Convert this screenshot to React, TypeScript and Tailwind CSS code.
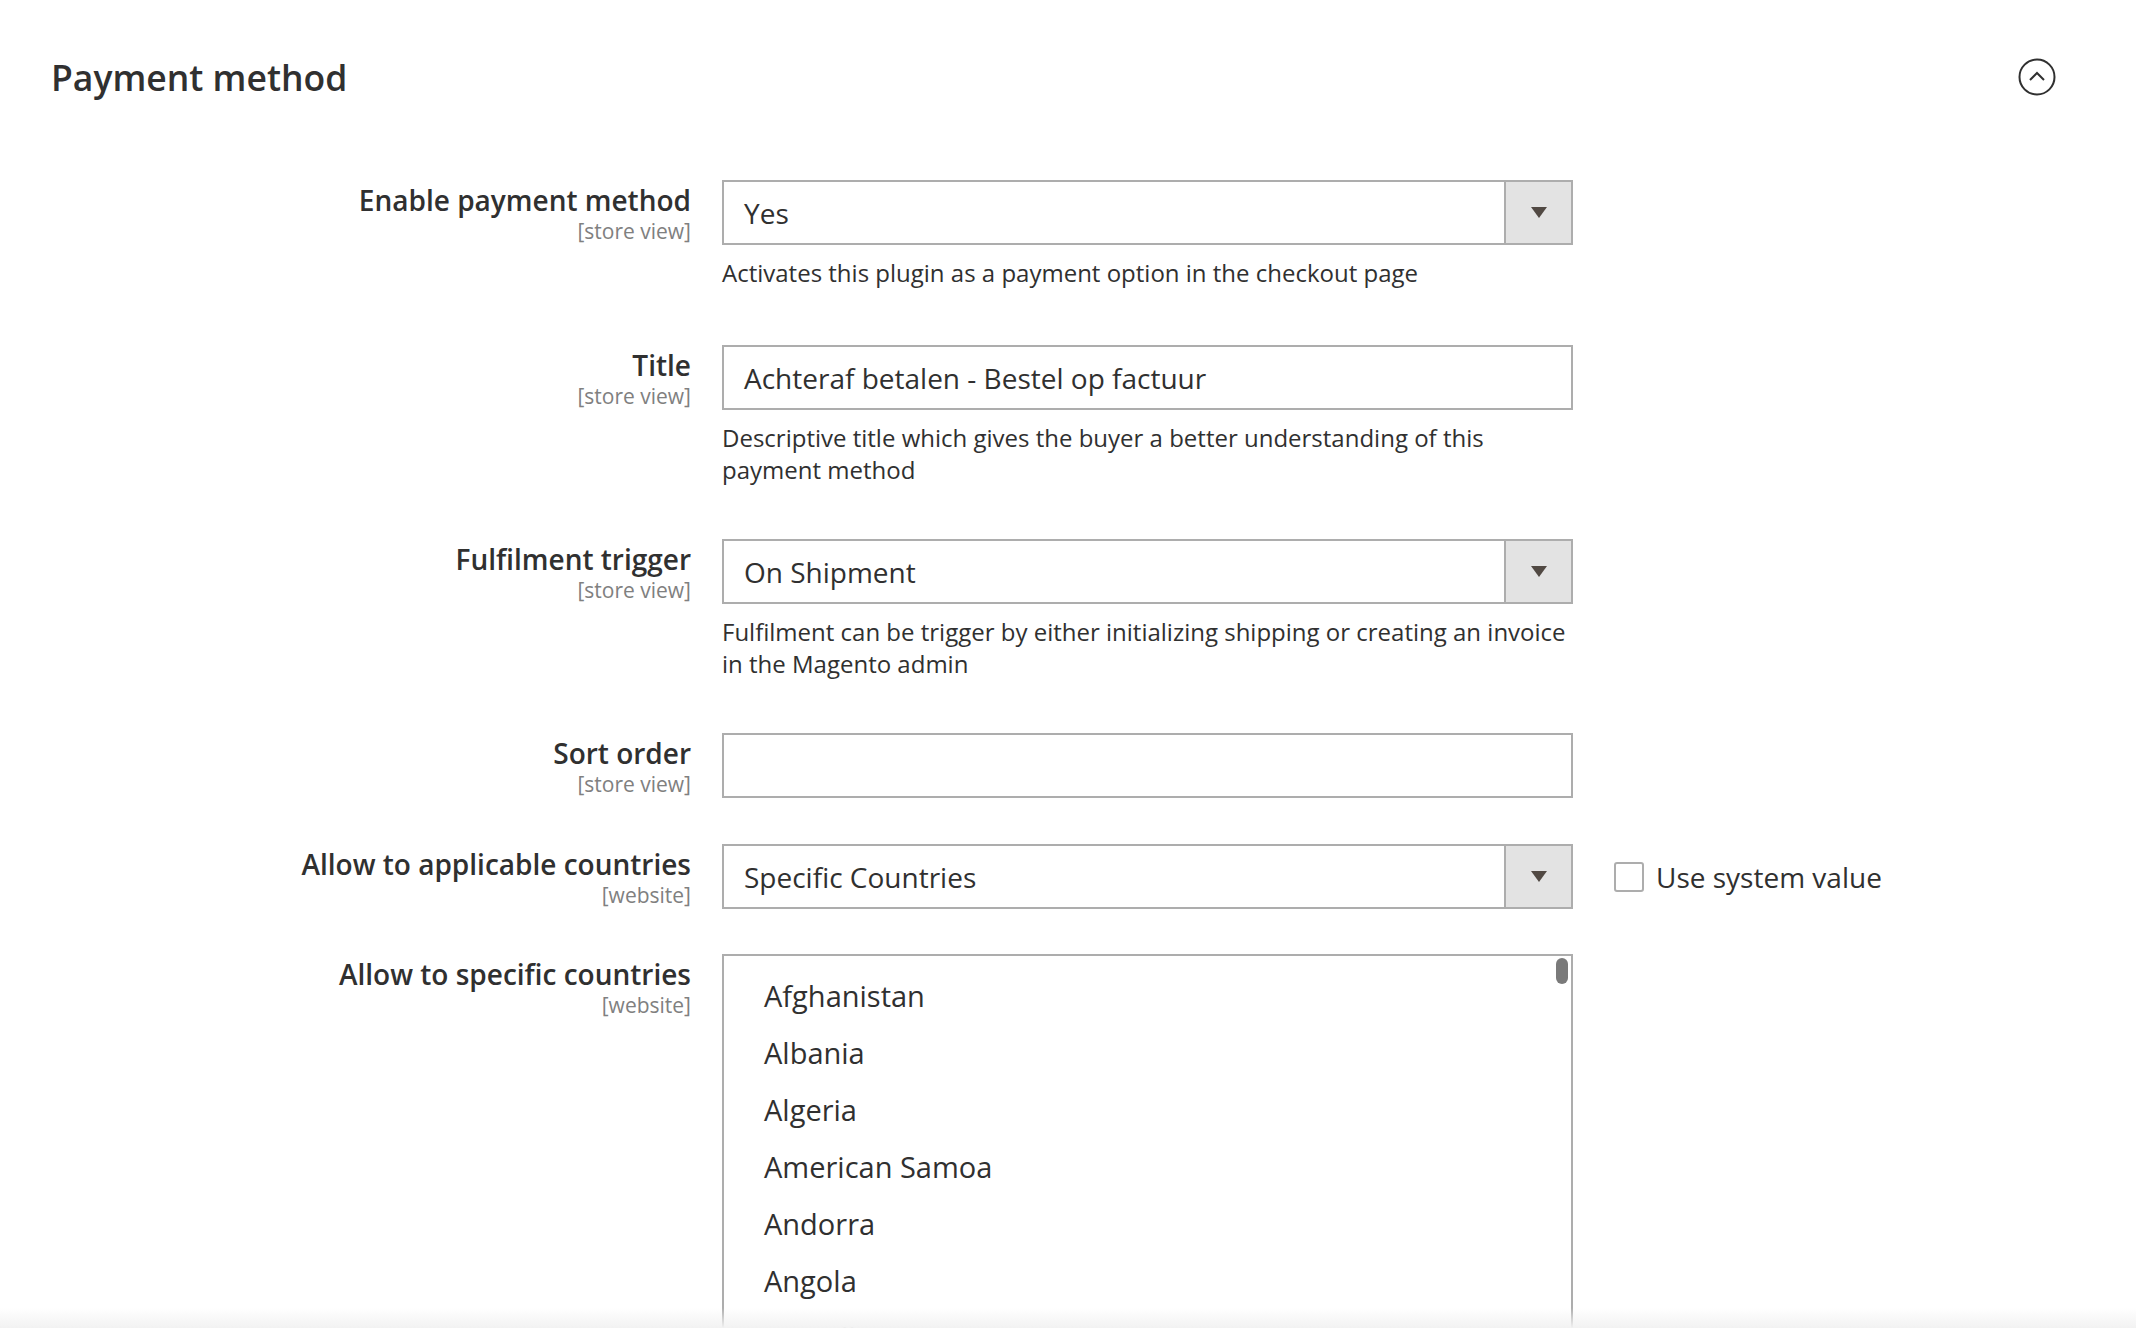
const font = { fontFamily: '"Open Sans", "Liberation Sans", sans-serif' };

function Label({ title, scope }: { title: string; scope: string }) {
  return (
    <div className="w-[722px] shrink-0 pr-[31px] text-right pt-[2px]">
      <div className="text-[28px] font-semibold leading-[36px] text-[#303030]">{title}</div>
      <div className="text-[21px] leading-[26px] text-[#808080]">{scope}</div>
    </div>
  );
}

function Select({ value }: { value: string }) {
  return (
    <div className="flex h-[65px] w-[851px] border-2 border-[#adadad] bg-white">
      <div className="flex flex-1 items-center pl-[20px] text-[28px] text-[#303030]">{value}</div>
      <div className="flex w-[67px] items-center justify-center border-l-2 border-[#adadad] bg-[#e3e3e3]">
        <svg width="16" height="12" viewBox="0 0 16 12"><path d="M0 0h16L8 11z" fill="#514943" /></svg>
      </div>
    </div>
  );
}

function Input({ value }: { value: string }) {
  return (
    <div className="flex h-[65px] w-[851px] items-center border-2 border-[#adadad] bg-white pl-[20px] text-[28px] text-[#303030]">
      {value}
    </div>
  );
}

function Note({ children }: { children: React.ReactNode }) {
  return <div className="mt-[12px] w-[851px] text-[24px] leading-[32px] text-[#303030]">{children}</div>;
}

const countries = ["Afghanistan", "Albania", "Algeria", "American Samoa", "Andorra", "Angola", "Anguilla"];

export default function App() {
  return (
    <div className="relative h-[1328px] w-[2136px] overflow-hidden bg-white" style={font}>
      <div className="flex items-center justify-between pl-[51px] pr-[80px] pt-[52px]">
        <h2 className="text-[35.5px] font-semibold leading-[50px] text-[#303030]">Payment method</h2>
        <svg width="38" height="38" viewBox="0 0 38 38">
          <circle cx="19" cy="19" r="17.5" fill="none" stroke="#303030" strokeWidth="2" />
          <path d="M12 22l7-7 7 7" fill="none" stroke="#303030" strokeWidth="2" />
        </svg>
      </div>

      <div className="mt-[78px] flex flex-col">
        <div className="flex">
          <Label title="Enable payment method" scope="[store view]" />
          <div>
            <Select value="Yes" />
            <Note>Activates this plugin as a payment option in the checkout page</Note>
          </div>
        </div>

        <div className="mt-[56px] flex">
          <Label title="Title" scope="[store view]" />
          <div>
            <Input value="Achteraf betalen - Bestel op factuur" />
            <Note>
              Descriptive title which gives the buyer a better understanding of this
              <br />
              payment method
            </Note>
          </div>
        </div>

        <div className="mt-[53px] flex">
          <Label title="Fulfilment trigger" scope="[store view]" />
          <div>
            <Select value="On Shipment" />
            <Note>
              Fulfilment can be trigger by either initializing shipping or creating an invoice
              <br />
              in the Magento admin
            </Note>
          </div>
        </div>

        <div className="mt-[53px] flex">
          <Label title="Sort order" scope="[store view]" />
          <Input value="" />
        </div>

        <div className="mt-[46px] flex">
          <Label title="Allow to applicable countries" scope="[website]" />
          <Select value="Specific Countries" />
          <label className="ml-[41px] flex items-center gap-[12px] text-[28px] text-[#303030]">
            <span className="h-[30px] w-[30px] rounded-[3px] border-2 border-[#adadad] bg-white" />
            Use system value
          </label>
        </div>

        <div className="mt-[45px] flex">
          <Label title="Allow to specific countries" scope="[website]" />
          <div className="relative h-[420px] w-[851px] overflow-hidden border-2 border-[#adadad] bg-white pt-[20px]">
            <div className="absolute right-[3px] top-[2px] h-[26px] w-[12px] rounded-full bg-[#7a7a7a]" />
            {countries.map((c) => (
              <div key={c} className="h-[57px] pl-[40px] text-[29px] leading-[40px] text-[#303030]">{c}</div>
            ))}
          </div>
        </div>
      </div>

      <div className="absolute bottom-0 left-0 h-[20px] w-full bg-gradient-to-b from-transparent to-[#f2f2f2]" />
    </div>
  );
}
